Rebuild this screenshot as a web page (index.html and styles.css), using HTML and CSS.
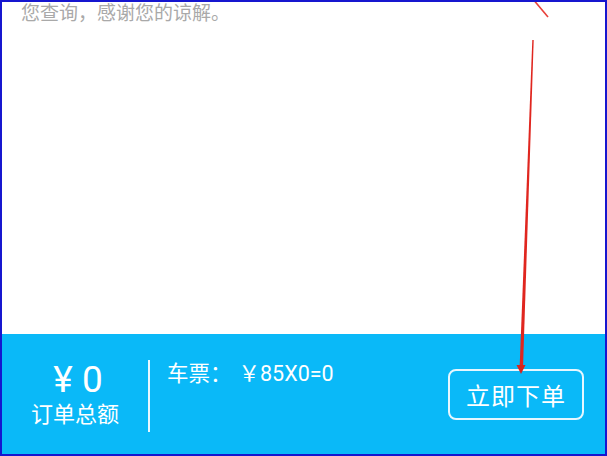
FILE: index.html
```html
<!DOCTYPE html>
<html lang="zh">
<head>
<meta charset="utf-8">
<link rel="stylesheet" href="styles.css">
</head>
<body>
<div class="frame">
  <div class="content">
    <p class="notice">您查询，感谢您的谅解。</p>
  </div>
  <div class="bar">
    <div class="total">
      <div class="amount">¥ 0</div>
      <div class="label">订单总额</div>
    </div>
    <div class="divider"></div>
    <div class="detail">车票：<span class="price">￥85X0=0</span></div>
    <button class="order">立即下单</button>
  </div>
  <svg class="annot" width="607" height="456" viewBox="0 0 607 456">
    <line x1="532" y1="-2" x2="548" y2="17" stroke="#e8403a" stroke-width="1.6"/>
    <polygon points="532.3,40 533.7,40 523,368 519.6,368" fill="#e0261f"/>
    <polygon points="516.5,365 525.5,365 521,374" fill="#d8231c"/>
  </svg>
</div>
</body>
</html>
```

FILE: styles.css
```css
* { box-sizing: border-box; }
html, body { margin: 0; padding: 0; background: #fff; }
.frame {
  position: relative;
  width: 607px;
  height: 456px;
  border: 2px solid #1616cf;
  display: flex;
  flex-direction: column;
  overflow: hidden;
  font-family: "Noto Sans CJK SC", "Noto Sans", sans-serif;
}
.content {
  flex: 1;
  background: #fff;
}
.notice {
  margin: 0 0 0 19px;
  font-size: 19px;
  line-height: 20px;
  color: #a9a9a9;
}
.bar {
  height: 120px;
  background: #0ab9f8;
  display: flex;
  align-items: center;
  color: #fff;
}
.total {
  width: 146px;
  display: flex;
  flex-direction: column;
  align-items: center;
}
.amount {
  font-family: Roboto, "Noto Sans CJK SC", sans-serif;
  font-size: 37px;
  line-height: 36px;
  margin-top: -2px;
  padding-left: 6px;
}
.label {
  font-size: 22px;
  line-height: 24px;
  margin-top: 2px;
}
.divider {
  width: 2px;
  height: 72px;
  background: #e9f8ff;
  margin-top: 4px;
}
.detail {
  align-self: flex-start;
  margin-top: 27px;
  margin-left: 17px;
  font-family: Roboto, "Noto Sans CJK SC", sans-serif;
  font-size: 21.5px;
  line-height: 26px;
  flex: 1;
}
.price {
  margin-left: 7px;
}
.order {
  width: 136px;
  height: 51px;
  margin-right: 21px;
  background: transparent;
  border: 2px solid #e6f7ff;
  border-radius: 8px;
  color: #fff;
  font-family: "Noto Sans CJK SC", sans-serif;
  font-size: 24px;
  letter-spacing: 1px;
  padding: 0;
}
.annot {
  position: absolute;
  left: -2px;
  top: -2px;
  pointer-events: none;
}
```
